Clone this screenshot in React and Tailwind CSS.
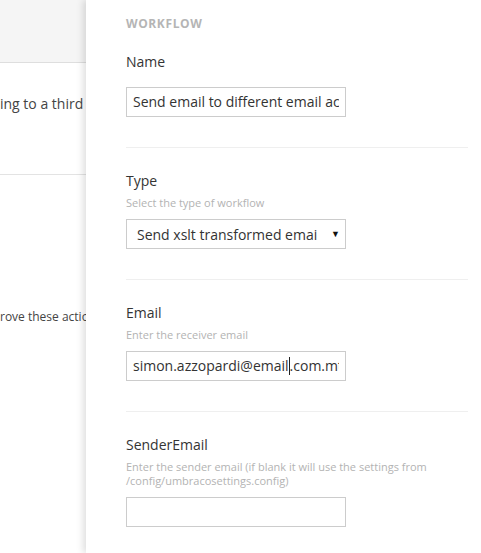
import React from 'react';

const font = { fontFamily: '"Open Sans", "Liberation Sans", sans-serif' };

const Field = ({ label, description, children, last }) => (
  <div className={`pt-[23px] ${last ? '' : 'pb-[30px] border-b border-[#efefef]'}`}>
    <div className="text-[14px] leading-[20px] text-[#343434]">{label}</div>
    {description && (
      <div className="mt-[5px] text-[11px] leading-[14px] text-[#b3b3b3]">{description}</div>
    )}
    <div className={description ? 'mt-[9px]' : 'mt-[15px]'}>{children}</div>
  </div>
);

const TextInput = ({ value, caretAt }) => (
  <div className="w-[220px] h-[30px] border border-[#cccccc] bg-white flex items-center px-[6px] text-[14px] text-[#333]">
    <div className="w-full overflow-hidden whitespace-nowrap leading-[20px]">
      {caretAt != null ? (
        <>
          {value.slice(0, caretAt)}
          <span className="inline-block align-middle w-0 h-[18px] border-l border-[#222] -mt-[2px]" />
          {value.slice(caretAt)}
        </>
      ) : (
        value
      )}
    </div>
  </div>
);

export default function App() {
  return (
    <div className="relative w-[481px] h-[553px] overflow-hidden bg-white" style={font}>
      {/* page behind the slide-over */}
      <div className="h-[63px] bg-[#f5f5f5] border-b border-[#dedede]" />
      <div className="h-[112px] border-b border-[#e3e3e3] pt-[30px] text-[14px] text-[#444] whitespace-nowrap">
        ing to a third party
      </div>
      <div className="pt-[133px] text-[12px] text-[#444] whitespace-nowrap">rove these actions</div>

      {/* workflow panel */}
      <div className="absolute top-0 bottom-0 left-[86px] right-0 bg-white shadow-[-3px_0_7px_rgba(0,0,0,0.13)] pl-[40px] pr-[13px] pt-[16px]">
        <div className="text-[12px] leading-[15px] font-bold tracking-[0.6px] text-[#b5b5b5]">WORKFLOW</div>
        <div className="-mt-[2px]">
          <Field label="Name">
            <TextInput value="Send email to different email accounts" />
          </Field>
          <Field label="Type" description="Select the type of workflow">
            <div className="w-[220px] h-[30px] border border-[#cccccc] bg-white flex items-center justify-between pl-[10px] pr-[5px] text-[14px] text-[#333] whitespace-nowrap overflow-hidden">
              <span>Send xslt transformed emai</span>
              <span className="text-[9px] text-[#111]">▼</span>
            </div>
          </Field>
          <Field label="Email" description="Enter the receiver email">
            <TextInput value="simon.azzopardi@email.com.mt" caretAt={21} />
          </Field>
          <Field
            label="SenderEmail"
            description="Enter the sender email (if blank it will use the settings from /config/umbracosettings.config)"
            last
          >
            <TextInput value="" />
          </Field>
        </div>
      </div>
    </div>
  );
}
